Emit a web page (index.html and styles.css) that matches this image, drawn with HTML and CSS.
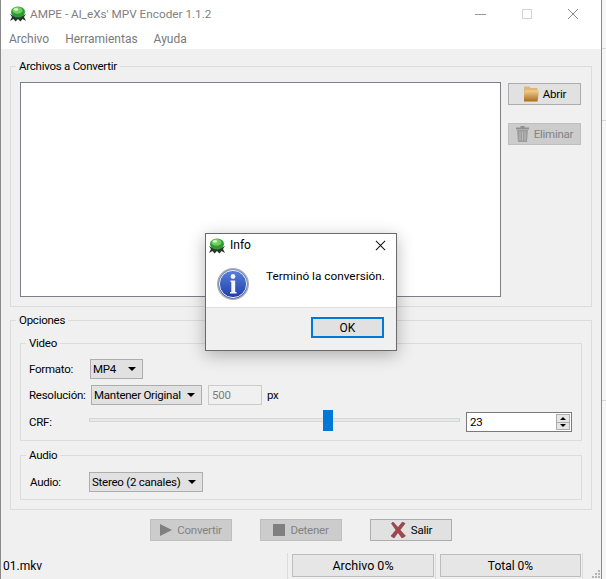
FILE: index.html
```html
<!DOCTYPE html>
<html lang="es">
<head>
<meta charset="utf-8">
<title>AMPE - Al_eXs' MPV Encoder 1.1.2</title>
<link rel="stylesheet" href="styles.css">
</head>
<body>
<svg class="defs" width="0" height="0" aria-hidden="true">
  <defs>
    <linearGradient id="folder" x1="0" y1="0" x2="0" y2="1">
      <stop offset="0" stop-color="#f3cf8e"/>
      <stop offset="1" stop-color="#a96c1c"/>
    </linearGradient>
  </defs>
  <symbol id="app" viewBox="0 0 16 16">
    <path d="M0 15 L2 11 L0 8 L4 10 L12 10 L16 8 L14 11 L16 15 L12.500 13 L10.500 15.500 L8 13 L5.500 15.500 L3.500 13 Z" fill="#26352a"/>
    <ellipse cx="8" cy="6" rx="7" ry="5.600" fill="#2f9a35"/>
    <ellipse cx="7.500" cy="4.400" rx="5" ry="3.400" fill="#6fd05f"/>
    <ellipse cx="6" cy="3.400" rx="2.200" ry="1.300" fill="#d3f7c6"/>
  </symbol>
</svg>
<div class="window">
  <header class="titlebar">
    <svg class="app-icon"><use href="#app"/></svg>
    <span class="title">AMPE - Al_eXs' MPV Encoder 1.1.2</span>
    <div class="controls">
      <svg class="ctl" viewBox="0 0 12 12"><path d="M0 6.500H11" stroke="#9a9a9a" fill="none"/></svg>
      <svg class="ctl" viewBox="0 0 12 12"><rect x="1.500" y="1.500" width="9" height="9" stroke="#d4d4d4" fill="none"/></svg>
      <svg class="ctl" viewBox="0 0 12 12"><path d="M1 1L11 11M11 1L1 11" stroke="#8a8a8a" fill="none"/></svg>
    </div>
  </header>
  <nav class="menubar">
    <span>Archivo</span><span>Herramientas</span><span>Ayuda</span>
  </nav>
  <main class="content">
    <fieldset class="group files">
      <legend>Archivos a Convertir</legend>
      <div class="files-row">
        <div class="listbox"></div>
        <div class="side">
          <button class="btn side-btn">
            <svg class="ico" viewBox="0 0 16 16">
              <path d="M1 .5h5.500l1 1.500H14.500V7H1z" fill="#dfb878"/>
              <path d="M1 7.500L2.500 4.500H16L14.500 15.500H1z" fill="url(#folder)"/>
            </svg>
            Abrir
          </button>
          <button class="btn side-btn off btn-del">
            <svg class="ico ico-trash" viewBox="0 0 13 16">
              <path d="M4.500 0h4v1.500H13V3.500H0V1.500h4.500z" fill="#8f8f8f"/>
              <path d="M1 4h11l-1 12H2z" fill="#9c9c9c"/>
              <path d="M4 5.500v9M6.500 5.500v9M9 5.500v9" stroke="#b9b9b9" fill="none"/>
            </svg>
            Eliminar
          </button>
        </div>
      </div>
    </fieldset>
    <fieldset class="group options">
      <legend>Opciones</legend>
      <fieldset class="group video">
        <legend>Video</legend>
        <div class="row">
          <label class="lbl lbl-format">Formato:</label>
          <div class="combo combo-format">MP4<i class="arrow"></i></div>
        </div>
        <div class="row">
          <label class="lbl lbl-res">Resolución:</label>
          <div class="combo combo-res">Mantener Original<i class="arrow"></i></div>
          <div class="numbox">500</div>
          <span class="unit">px</span>
        </div>
        <div class="row row-crf">
          <label class="lbl lbl-crf">CRF:</label>
          <div class="slider"><span class="thumb"></span></div>
          <div class="spin">
            <span class="spin-val">23</span>
            <div class="spin-btns">
              <span class="spin-btn"><i class="tri up"></i></span>
              <span class="spin-btn"><i class="tri"></i></span>
            </div>
          </div>
        </div>
      </fieldset>
      <fieldset class="group audio">
        <legend>Audio</legend>
        <div class="row">
          <label class="lbl lbl-audio">Audio:</label>
          <div class="combo combo-audio">Stereo (2 canales)<i class="arrow"></i></div>
        </div>
      </fieldset>
    </fieldset>
    <div class="actions">
      <button class="btn act off">
        <svg class="ico-sm" viewBox="0 0 12 12"><path d="M0 0L12 6L0 12z" fill="#808080"/></svg>
        Convertir
      </button>
      <button class="btn act off">
        <svg class="ico-sm" viewBox="0 0 12 12"><rect width="12" height="12" fill="#808080"/></svg>
        Detener
      </button>
      <button class="btn act">
        <svg class="ico-x" viewBox="0 0 16 16">
          <path d="M3 0L8 5.500L12.500 0L15 1.500L10 8L15.500 14L12 16L8 10.500L4 16L1 14L6 8L1.500 1.500z" fill="#a8434b" stroke="#6d3a40" stroke-width=".6"/>
        </svg>
        Salir
      </button>
    </div>
    <footer class="statusbar">
      <span class="file">01.mkv</span>
      <span class="sep"></span>
      <div class="stat stat-file">Archivo 0%</div>
      <span class="sep sep-mid"></span>
      <div class="stat stat-total">Total 0%</div>
      <span class="sep sep-mid"></span>
      <svg class="grip" viewBox="0 0 11 11">
        <path d="M8 2h2v2H8zM5 5h2v2H5zM8 5h2v2H8zM2 8h2v2H2zM5 8h2v2H5zM8 8h2v2H8z" fill="#b4b4b4"/>
      </svg>
    </footer>
  </main>
</div>
<div class="desktop-strip"></div>
<section class="dialog" role="dialog">
  <div class="dlg-title">
    <svg class="dlg-app"><use href="#app"/></svg>
    <span class="dlg-name">Info</span>
    <svg class="dlg-close" viewBox="0 0 12 12"><path d="M1 1L11 11M11 1L1 11" stroke="#111" stroke-width="1.100" fill="none"/></svg>
  </div>
  <div class="dlg-body">
    <svg class="dlg-info" viewBox="0 0 32 32">
      <defs>
        <linearGradient id="blue" x1="0" y1="0" x2="0" y2="1">
          <stop offset="0" stop-color="#5d84dc"/>
          <stop offset="1" stop-color="#1a3aa8"/>
        </linearGradient>
      </defs>
      <circle cx="16" cy="16" r="15.200" fill="url(#blue)" stroke="#a9acb3" stroke-width="1.600"/>
      <circle cx="16" cy="16" r="13.600" fill="none" stroke="#eef0f5"/>
      <circle cx="16" cy="8.500" r="2.400" fill="#f4f6fb"/>
      <path d="M13.500 12.500h4.700v11.500h1.400v1.500h-6.600v-1.500h1.300v-10h-.8z" fill="#f4f6fb"/>
    </svg>
    <span class="dlg-text">Terminó la conversión.</span>
  </div>
  <div class="dlg-foot">
    <button class="btn dlg-ok">OK</button>
  </div>
</section>
</body>
</html>
```
FILE: styles.css
```css
* { box-sizing: border-box; }
html, body { margin: 0; padding: 0; }
body {
  width: 606px;
  height: 579px;
  overflow: hidden;
  display: flex;
  background: #fff;
  font-family: Roboto, "Noto Sans", sans-serif;
  font-size: 12px;
  color: #000;
}
.defs { position: absolute; }
.window {
  width: 602px;
  height: 579px;
  flex: none;
  display: flex;
  flex-direction: column;
  border-left: 1px solid #8a8a8a;
  border-right: 1px solid #8a8a8a;
}
.desktop-strip {
  flex: 1;
  background:
    linear-gradient(#d9d9d9, #d9d9d9) 0 48px / 100% 1px no-repeat,
    linear-gradient(#d9d9d9, #d9d9d9) 0 120px / 100% 1px no-repeat,
    linear-gradient(#d9d9d9, #d9d9d9) 0 400px / 100% 1px no-repeat,
    #f6f6f6;
}
.titlebar {
  height: 27px;
  flex: none;
  display: flex;
  align-items: center;
  background: #fff;
  padding-left: 9px;
}
.app-icon { width: 16px; height: 16px; flex: none; }
.title { margin-left: 4px; color: #808080; font-size: 11.750px; }
.controls { margin-left: auto; display: flex; align-items: center; }
.ctl { width: 12px; height: 12px; margin-left: 34px; }
.ctl:last-child { margin-right: 22px; }
.menubar {
  height: 22px;
  flex: none;
  display: flex;
  gap: 16px;
  padding: 2px 0 0 8px;
  align-items: center;
  background: #fff;
  color: #7a7a7a;
}
.content {
  flex: 1;
  background: #f0f0f0;
  padding: 9px 9px 0;
  display: flex;
  flex-direction: column;
  min-height: 0;
}
.group {
  margin: 0;
  border: 1px solid #dcdcdc;
  min-width: 0;
  font-size: 11.500px;
  letter-spacing: -.25px;
}
.group legend {
  margin-left: -4px;
  padding: 0 3px;
  height: 16px;
  line-height: 16px;
}
.video legend, .audio legend { margin-left: -3px; }
.files { padding: 8px 9px 9px; height: 249px; flex: none; }
.files-row { display: flex; }
.listbox {
  width: 481px;
  height: 215px;
  background: #fff;
  border: 1px solid #7c7f85;
  flex: none;
}
.side {
  margin: 1px 0 0 7px;
  display: flex;
  flex-direction: column;
  gap: 18px;
}
.btn {
  display: flex;
  align-items: center;
  justify-content: center;
  font: inherit;
  letter-spacing: inherit;
  color: #000;
  background: #e1e1e1;
  border: 1px solid #adadad;
  padding: 0;
  white-space: nowrap;
}
.btn.off { background: #cccccc; border-color: #bfbfbf; color: #838383; }
.side-btn { width: 73px; height: 22px; gap: 4px; }
.btn-del { gap: 5px; }
.ico { width: 16px; height: 16px; flex: none; }
.ico-trash { width: 13px; }
.ico-sm { width: 12px; height: 12px; flex: none; }
.ico-x { width: 16px; height: 16px; flex: none; }
.options { margin-top: 5px; padding: 7px 9px 9px; flex: none; }
.video { padding: 8px 8px 8px; }
.row { display: flex; align-items: center; height: 20px; }
.row + .row { margin-top: 6px; }
.row-crf { height: 21px; }
.lbl-format { width: 61px; }
.lbl-res { width: 62px; }
.lbl-crf { width: 60px; }
.lbl-audio { width: 60px; padding-left: 1px; }
.combo {
  height: 20px;
  display: flex;
  align-items: center;
  justify-content: space-between;
  background: #e1e1e1;
  border: 1px solid #adadad;
  padding: 0 6px 0 2px;
  white-space: nowrap;
}
.combo-format { width: 53px; }
.combo-res { width: 111px; }
.combo-audio { width: 114px; }
.arrow {
  width: 0;
  height: 0;
  border: 4px solid transparent;
  border-top-color: #000;
  border-bottom-width: 0;
}
.numbox {
  width: 54px;
  height: 20px;
  margin-left: 6px;
  display: flex;
  align-items: center;
  padding-left: 3px;
  border: 1px solid #cccccc;
  background: #f0f0f0;
  color: #7c7c7c;
}
.unit { margin-left: 5px; }
.slider {
  position: relative;
  width: 371px;
  height: 4px;
  margin-top: -3px;
  background: #e7eaea;
  border: 1px solid #d6d6d6;
}
.thumb {
  position: absolute;
  left: 233px;
  top: -9px;
  width: 10px;
  height: 21px;
  background: #0078d7;
}
.spin {
  width: 106px;
  height: 20px;
  margin: 1px 0 0 6px;
  display: flex;
  align-items: center;
  justify-content: space-between;
  background: #fff;
  border: 1px solid #7a7a7a;
  padding: 1px 1px 1px 3px;
}
.spin-btns { display: flex; flex-direction: column; width: 14px; height: 16px; }
.spin-btn {
  flex: 1;
  display: flex;
  align-items: center;
  justify-content: center;
  background: #e6e6e6;
  border: 1px solid #adadad;
}
.spin-btn + .spin-btn { border-top: 0; }
.tri {
  width: 0;
  height: 0;
  border: 3px solid transparent;
  border-top-color: #000;
  border-bottom-width: 0;
}
.tri.up {
  border-top-width: 0;
  border-top-color: transparent;
  border-bottom: 3px solid #000;
}
.audio { margin-top: 6px; padding: 9px 8px 7px; }
.actions {
  margin-top: 9px;
  display: flex;
  justify-content: center;
  gap: 28px;
  flex: none;
  font-size: 11.500px;
  letter-spacing: -.25px;
}
.act { width: 82px; height: 22px; gap: 5px; }
.statusbar {
  margin: 11px -9px 0;
  flex: 1;
  display: flex;
  align-items: flex-end;
  padding-left: 2px;
}
.file { width: 284px; align-self: center; }
.sep { width: 1px; height: 26px; background: #dcdcdc; flex: none; }
.stat {
  height: 23px;
  margin-bottom: 2px;
  display: flex;
  align-items: center;
  justify-content: center;
  background: #e6e6e6;
  border: 1px solid #bcbcbc;
  flex: none;
}
.stat-file { width: 142px; margin-left: 4px; font-size: 12.500px; }
.stat-total { width: 141px; margin-left: 4px; }
.sep-mid { margin-left: 1px; }
.grip { width: 11px; height: 11px; margin-left: 7px; }
.dialog {
  position: absolute;
  left: 205px;
  top: 233px;
  width: 192px;
  height: 118px;
  display: flex;
  flex-direction: column;
  background: #fff;
  border: 1px solid #6a6a6a;
  box-shadow: 0 4px 16px rgba(0, 0, 0, .28);
}
.dlg-title {
  height: 23px;
  display: flex;
  align-items: center;
  padding-left: 3px;
  flex: none;
}
.dlg-app { width: 16px; height: 16px; }
.dlg-name { margin: 0 0 2px 5px; }
.dlg-close { width: 11px; height: 11px; margin-left: auto; margin-right: 10px; }
.dlg-body {
  height: 50px;
  display: flex;
  align-items: flex-start;
  padding: 5px 0 0 11px;
  flex: none;
}
.dlg-info { width: 32px; height: 32px; margin-top: 6px; flex: none; }
.dlg-text { margin-left: 17px; margin-top: 7px; font-size: 11.800px; }
.dlg-foot {
  flex: 1;
  display: flex;
  align-items: flex-start;
  justify-content: flex-end;
  background: #f0f0f0;
  border-top: 1px solid #dfdfdf;
  padding: 9px 12px 0 0;
}
.dlg-ok {
  width: 73px;
  height: 21px;
  border: 2px solid #0078d7;
}
```
